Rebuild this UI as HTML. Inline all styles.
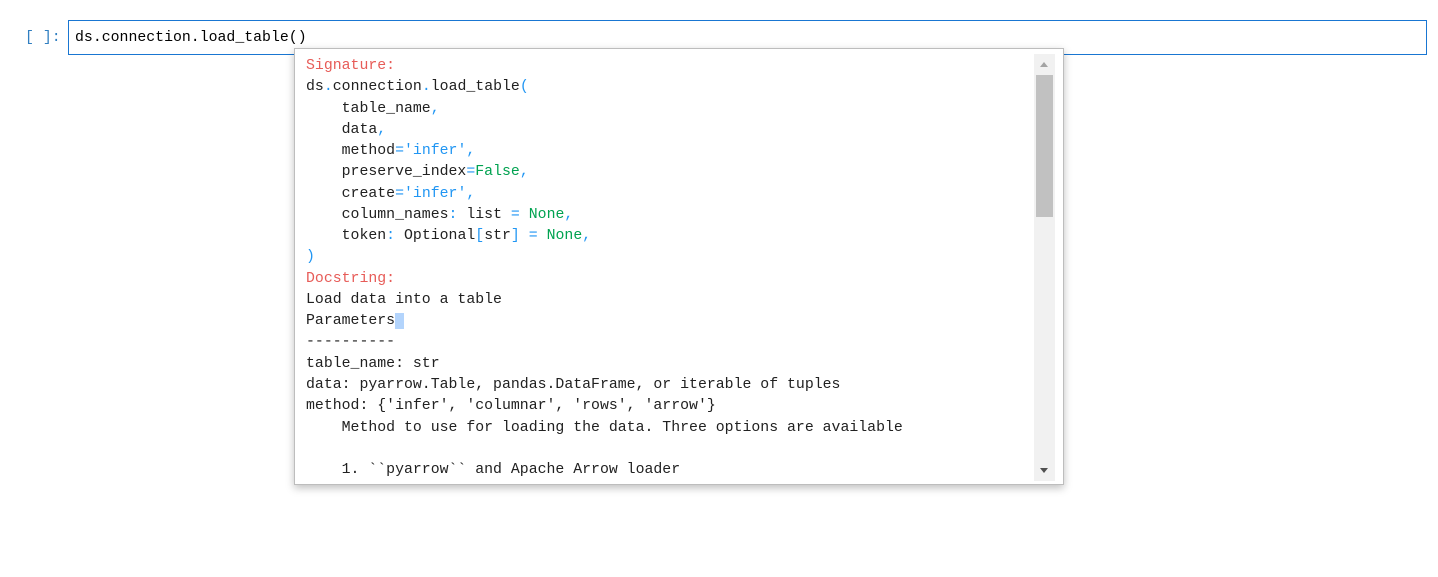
<!DOCTYPE html>
<html><head><style>
body{margin:0;width:1438px;height:577px;background:#fff;position:relative;overflow:hidden;font-family:"Liberation Mono",monospace;}
.prompt{position:absolute;left:25px;top:30px;color:#307fc1;font-size:14.85px;}
.cell{position:absolute;left:68px;top:20px;width:1359px;height:35px;border:1px solid #1976d2;box-sizing:border-box;}
.cell span.t{position:absolute;left:6px;top:9px;font-size:14.85px;color:#000;white-space:pre;}
.pop{position:absolute;left:294px;top:48px;width:770px;height:437px;border:1px solid #bdbdbd;box-sizing:border-box;background:#fff;box-shadow:0 3px 8px rgba(0,0,0,.25);overflow:hidden;}
pre{margin:0;position:absolute;left:11px;top:7px;font-family:"Liberation Mono",monospace;font-size:14.85px;line-height:21.27px;color:#212121;}
.r{color:#e75c58}.b{color:#2196f3}.g{color:#00a250}.o{color:#2196f3}
.sb{position:absolute;left:739px;top:5px;width:21px;height:427px;background:#f1f1f1;}
.th{position:absolute;left:2px;top:21px;width:17px;height:142px;background:#c1c1c1;}
.ar{position:absolute;left:6px;width:0;height:0;border-left:4px solid transparent;border-right:4px solid transparent;}
.up{top:8px;border-bottom:5px solid #a3a3a3;}
.dn{bottom:8px;border-top:5px solid #505050;}
.sel{background:#b3d4fc}
</style></head><body>
<div class="prompt">[ ]:</div>
<div class="cell"><span class="t">ds.connection.load_table()</span></div>
<div class="pop">
<pre><span class="r">Signature:</span>
ds<span class="o">.</span>connection<span class="o">.</span>load_table<span class="b">(</span>
    table_name<span class="o">,</span>
    data<span class="o">,</span>
    method<span class="o">=</span><span class="b">'infer'</span><span class="o">,</span>
    preserve_index<span class="o">=</span><span class="g">False</span><span class="o">,</span>
    create<span class="o">=</span><span class="b">'infer'</span><span class="o">,</span>
    column_names<span class="o">:</span> list <span class="o">=</span> <span class="g">None</span><span class="o">,</span>
    token<span class="o">:</span> Optional<span class="b">[</span>str<span class="b">]</span> <span class="o">=</span> <span class="g">None</span><span class="o">,</span>
<span class="b">)</span>
<span class="r">Docstring:</span>
Load data into a table
Parameters<span class="sel"> </span>
----------
table_name: str
data: pyarrow.Table, pandas.DataFrame, or iterable of tuples
method: {'infer', 'columnar', 'rows', 'arrow'}
    Method to use for loading the data. Three options are available

    1. ``pyarrow`` and Apache Arrow loader</pre>
<div class="sb"><div class="ar up"></div><div class="th"></div><div class="ar dn"></div></div>
</div>
</body></html>
